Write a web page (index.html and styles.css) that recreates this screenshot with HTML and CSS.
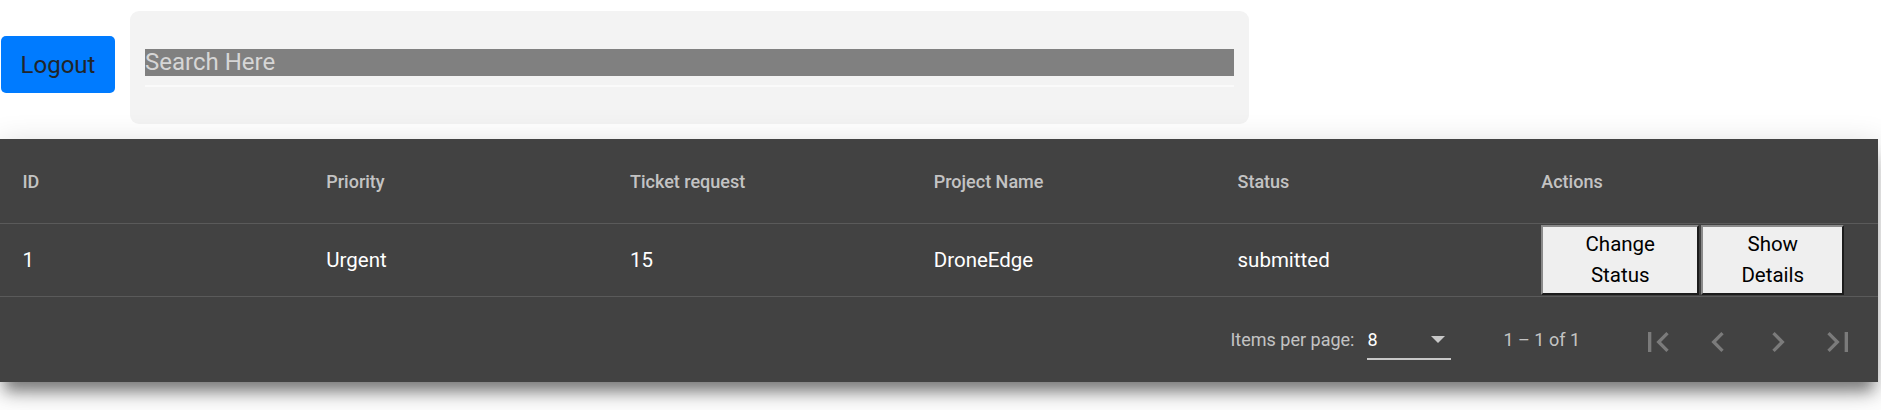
FILE: index.html
```html
<!DOCTYPE html>
<html lang="en">
<head>
<meta charset="utf-8">
<title>Tickets</title>
<link rel="stylesheet" href="styles.css">
</head>
<body>
  <div class="topbar">
    <button class="btn-logout">Logout</button>
    <div class="search-card">
      <input class="search-input" type="text" placeholder="Search Here">
      <div class="search-underline"></div>
    </div>
  </div>

  <div class="table-card">
    <div class="row header-row">
      <div class="cell">ID</div>
      <div class="cell">Priority</div>
      <div class="cell">Ticket request</div>
      <div class="cell">Project Name</div>
      <div class="cell">Status</div>
      <div class="cell">Actions</div>
    </div>
    <div class="row data-row">
      <div class="cell">1</div>
      <div class="cell">Urgent</div>
      <div class="cell">15</div>
      <div class="cell">DroneEdge</div>
      <div class="cell">submitted</div>
      <div class="cell actions">
        <button class="btn-action btn-change">Change<br>Status</button>
        <button class="btn-action btn-details">Show<br>Details</button>
      </div>
    </div>
    <div class="paginator">
      <span class="page-label">Items per page:</span>
      <div class="page-select">
        <span class="page-value">8</span>
        <span class="page-arrow"></span>
      </div>
      <span class="page-range">1 – 1 of 1</span>
      <div class="page-nav">
        <button class="nav-btn" aria-label="First page">
          <svg viewBox="0 0 24 24" class="nav-icon"><path d="M18.41 16.59L13.82 12l4.59-4.59L17 6l-6 6 6 6zM6 6h2v12H6z"/></svg>
        </button>
        <button class="nav-btn" aria-label="Previous page">
          <svg viewBox="0 0 24 24" class="nav-icon"><path d="M15.41 7.41L14 6l-6 6 6 6 1.41-1.41L10.83 12z"/></svg>
        </button>
        <button class="nav-btn" aria-label="Next page">
          <svg viewBox="0 0 24 24" class="nav-icon"><path d="M10 6L8.59 7.41 13.17 12l-4.58 4.59L10 18l6-6z"/></svg>
        </button>
        <button class="nav-btn" aria-label="Last page">
          <svg viewBox="0 0 24 24" class="nav-icon"><path d="M5.59 7.41L10.18 12l-4.59 4.59L7 18l6-6-6-6zM16 6h2v12h-2z"/></svg>
        </button>
      </div>
    </div>
  </div>
</body>
</html>
```

FILE: styles.css
```css
* {
  box-sizing: border-box;
}

html, body {
  margin: 0;
  padding: 0;
  background: #ffffff;
  font-family: Roboto, "Liberation Sans", Arial, sans-serif;
}

body {
  min-height: 410px;
}

.topbar {
  display: flex;
  align-items: flex-start;
  gap: 15px;
  padding: 11px 0 0 1px;
}

.btn-logout {
  margin-top: 25px;
  height: 57px;
  width: 114px;
  padding: 0;
  border: none;
  border-radius: 5px;
  background: #007bff;
  color: #212529;
  font-family: Roboto, "Liberation Sans", Arial, sans-serif;
  font-size: 24px;
  line-height: 36px;
}

.search-card {
  width: 1119px;
  padding: 38px 15px 37px 15px;
  background: #f3f3f3;
  border-radius: 9px;
}

.search-input {
  display: block;
  width: 100%;
  height: 27px;
  margin: 0;
  padding: 0;
  border: none;
  outline: none;
  background: #808080;
  color: #d6d6d6;
  font-family: Roboto, "Liberation Sans", Arial, sans-serif;
  font-size: 24px;
  line-height: 27px;
}

.search-input::placeholder {
  color: #d6d6d6;
  opacity: 1;
}

.search-underline {
  margin-top: 9px;
  height: 2px;
  background: #fafafa;
}

.table-card {
  position: relative;
  width: 1878px;
  margin-top: 15px;
  background: #424242;
  box-shadow: 0 14px 14px -5px rgba(0, 0, 0, 0.45),
              0 8px 30px 2px rgba(0, 0, 0, 0.16);
}

.row {
  display: flex;
  align-items: center;
  padding: 0 33px 0 22.5px;
  border-bottom: 1px solid #5a5a5a;
}

.cell {
  flex: 1 1 0;
  min-width: 0;
}

.header-row {
  height: 85px;
  color: rgba(255, 255, 255, 0.7);
  font-size: 18px;
  font-weight: 500;
}

.data-row {
  height: 73px;
  color: #ffffff;
  font-size: 20.5px;
}

.actions {
  display: flex;
  gap: 2px;
}

.btn-action {
  height: 70px;
  padding: 0 6px;
  border-width: 2px;
  border-style: solid;
  border-color: #8a8a8a #1c1c1c #1c1c1c #8a8a8a;
  background: #efefef;
  color: #000000;
  font-family: Roboto, "Liberation Sans", Arial, sans-serif;
  font-size: 20.5px;
  line-height: 31px;
  text-align: center;
}

.btn-change {
  width: 158px;
}

.btn-details {
  width: 143px;
}

.paginator {
  display: flex;
  align-items: center;
  justify-content: flex-end;
  height: 85px;
  padding-right: 10px;
  color: rgba(255, 255, 255, 0.7);
  font-size: 18px;
}

.page-label {
  margin-right: 13px;
}

.page-select {
  display: flex;
  align-items: center;
  justify-content: space-between;
  width: 84px;
  padding: 10px 6px 8px 0;
  line-height: 20px;
  border-bottom: 2px solid #c8c8c8;
}

.page-value {
  color: #ffffff;
}

.page-arrow {
  width: 0;
  height: 0;
  border-left: 7px solid transparent;
  border-right: 7px solid transparent;
  border-top: 7px solid #c8c8c8;
}

.page-range {
  margin: 0 48px 0 52px;
}

.page-nav {
  display: flex;
}

.nav-btn {
  display: flex;
  align-items: center;
  justify-content: center;
  width: 60px;
  height: 48px;
  padding: 4px 0 0 0;
  border: none;
  background: transparent;
}

.nav-icon {
  width: 40px;
  height: 40px;
  fill: rgba(255, 255, 255, 0.3);
}
```
